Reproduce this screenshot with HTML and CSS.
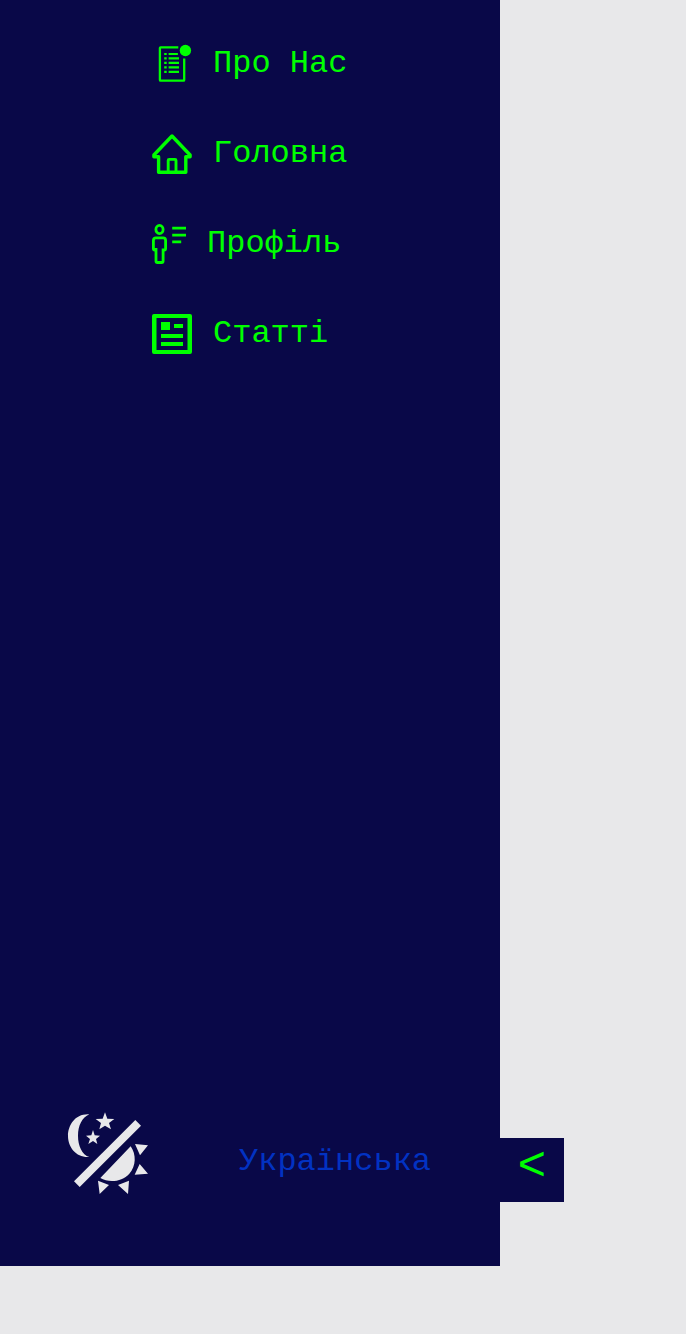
FILE: index.html
```html
<!DOCTYPE html>
<html lang="uk">
<head>
<meta charset="utf-8">
<title>Меню</title>
<link rel="stylesheet" href="styles.css">
</head>
<body>
<div class="layout">
  <aside class="sidebar">
    <nav class="menu">
      <a class="item">
        <svg class="icon" viewBox="0 0 40 40" fill="none" stroke="currentColor" stroke-width="2.3">
          <path d="M26.3 3.4H8.6Q7.9 3.4 7.9 4.1V36Q7.9 36.7 8.6 36.7H31.5Q32.2 36.7 32.2 36V14.5"/>
          <path d="M12.2 10h2.5M12.2 14.4h2.5M12.2 18.8h2.5M12.2 23.3h2.5M12.2 27.8h2.5M16.6 10h9.3M16.6 14.4H27M16.6 18.8H27M16.6 23.3H27M16.6 27.8H27" stroke-width="2.2"/>
          <circle cx="33.4" cy="6.5" r="5.7" fill="currentColor" stroke="none"/>
        </svg>
        <span>Про Нас</span>
      </a>
      <a class="item">
        <svg class="icon" viewBox="0 0 40 40" fill="none" stroke="currentColor" stroke-width="3.4">
          <path d="M20 2L1.9 21V22.8H6.6V38.3H33.8V22.8H38.1V21Z" stroke-linejoin="round"/>
          <path d="M16.2 38V26.4Q16.2 25.4 17.2 25.4H23Q24 25.4 24 26.4V38" stroke-width="2.9"/>
        </svg>
        <span>Головна</span>
      </a>
      <a class="item">
        <svg class="icon icon-narrow" viewBox="0 0 34 40" fill="none" stroke="currentColor" stroke-width="2.8">
          <ellipse cx="7.5" cy="5.5" rx="3.6" ry="4.1"/>
          <path d="M4 24V37Q4 38.5 5.4 38.5H9.7Q11.1 38.5 11.1 37V26H12.2Q13.6 26 13.6 24.5V16.4Q13.6 13.8 11.1 13.8H4Q1.4 13.8 1.4 16.4V24.5Q1.4 26 2.7 26H4"/>
          <path d="M20.2 4.1H34M20.2 11.1H34M20.2 17.8H29.2"/>
        </svg>
        <span>Профіль</span>
      </a>
      <a class="item">
        <svg class="icon" viewBox="0 0 40 40" fill="currentColor">
          <path fill-rule="evenodd" d="M2 0H38Q40 0 40 2V38Q40 40 38 40H2Q0 40 0 38V2Q0 0 2 0ZM4.5 4V36H35.5V4Z"/>
          <path d="M9 8h9v8H9ZM22 10h9v4h-9ZM9 20h22v4H9ZM9 28h22v4H9Z"/>
        </svg>
        <span>Статті</span>
      </a>
    </nav>
    <div class="footer">
      <svg class="theme" viewBox="0 0 300 300" fill="currentColor">
        <path d="M88 28C46 25 24 60 24 93C24 128 50 159 88 156C66 149 54 122 54 92C54 62 66 38 88 28Z"/>
        <path d="M135 22L142 41L163 42L147 54L153 73L135 62L118 73L123 54L107 42L128 41Z"/>
        <path d="M99 75L104 91L120 92L108 102L112 117L99 108L85 117L90 102L78 92L94 91Z"/>
        <path d="M226 45L243 62L59 246L42 229Z"/>
        <path d="M212 124C229 148 229 184 208 206C186 231 146 234 121 219Z"/>
        <path d="M225 117L264 121L240 151ZM239 177L264 206L224 209ZM114 227L147 240L119 267ZM207 227L204 267L174 240Z"/>
      </svg>
      <span class="language">Українська</span>
    </div>
  </aside>
  <button class="toggle">&lt;</button>
</div>
</body>
</html>
```
FILE: styles.css
```css
body {
  margin: 0;
  background: #e8e8ea;
  font-family: "Liberation Mono", monospace;
}

.layout {
  display: flex;
  align-items: flex-end;
  height: 1266px;
}

.sidebar {
  display: flex;
  flex-direction: column;
  justify-content: space-between;
  box-sizing: border-box;
  width: 500px;
  height: 100%;
  padding: 44px 60px 61px;
  background: #090848;
}

.menu {
  display: flex;
  flex-direction: column;
  align-items: flex-start;
  gap: 50px;
  padding-left: 92px;
}

.item {
  display: flex;
  align-items: center;
  gap: 21px;
  height: 40px;
  color: #00ff00;
  font-size: 32px;
  line-height: 36px;
}

.icon {
  width: 40px;
  height: 40px;
}

.icon-narrow {
  width: 34px;
}

.footer {
  display: flex;
  align-items: center;
  gap: 79px;
}

.theme {
  width: 100px;
  height: 100px;
  color: #e8e8ea;
}

.language {
  padding-top: 14px;
  color: #0232c2;
  font-size: 32px;
  line-height: 36px;
}

.toggle {
  width: 64px;
  height: 64px;
  margin: 0 0 64px;
  padding: 0 0 6px;
  border: 0;
  background: #090848;
  color: #00ff00;
  font: 48px/54px "Liberation Mono", monospace;
}
```
